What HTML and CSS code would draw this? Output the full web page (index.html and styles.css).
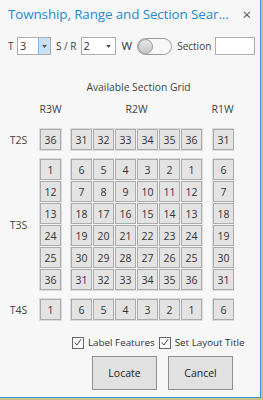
FILE: index.html
```html
<!DOCTYPE html>
<html>
<head>
<meta charset="utf-8">
<link rel="stylesheet" href="styles.css">
</head>
<body>
<div class="dialog">
  <div class="titlebar">
    <span class="title">Township, Range and Section Sear...</span>
    <span class="close">×</span>
  </div>
  <div class="params">
    <span class="lbl lbl-t">T</span>
    <div class="combo combo-t">
      <span class="val">3</span>
      <span class="drop drop-hot"><svg width="5" height="3" viewBox="0 0 5 3"><path d="M0 0H5L2.5 3Z" fill="#555"/></svg></span>
    </div>
    <span class="lbl lbl-sr">S / R</span>
    <div class="combo combo-r">
      <span class="val">2</span>
      <span class="drop"><svg width="5" height="3" viewBox="0 0 5 3"><path d="M0 0H5L2.5 3Z" fill="#555"/></svg></span>
    </div>
    <span class="lbl lbl-w">W</span>
    <div class="toggle"><span class="knob"></span></div>
    <span class="lbl lbl-sec">Section</span>
    <div class="input"></div>
  </div>
  <div class="grid-title">Available Section Grid</div>
  <div class="grid">
    <div></div>
    <div class="hdr">R3W</div>
    <div class="hdr">R2W</div>
    <div class="hdr">R1W</div>

    <div class="tlabel">T2S</div>
    <div class="group g1"><span class="sec">36</span></div>
    <div class="group g6">
      <span class="sec">31</span><span class="sec">32</span><span class="sec">33</span><span class="sec">34</span><span class="sec">35</span><span class="sec">36</span>
    </div>
    <div class="group g1 last"><span class="sec">31</span></div>

    <div class="tlabel">T3S</div>
    <div class="group g1">
      <span class="sec">1</span><span class="sec">12</span><span class="sec">13</span><span class="sec">24</span><span class="sec">25</span><span class="sec">36</span>
    </div>
    <div class="group g6">
      <span class="sec">6</span><span class="sec">5</span><span class="sec">4</span><span class="sec">3</span><span class="sec">2</span><span class="sec">1</span>
      <span class="sec">7</span><span class="sec">8</span><span class="sec">9</span><span class="sec">10</span><span class="sec">11</span><span class="sec">12</span>
      <span class="sec">18</span><span class="sec">17</span><span class="sec">16</span><span class="sec">15</span><span class="sec">14</span><span class="sec">13</span>
      <span class="sec">19</span><span class="sec">20</span><span class="sec">21</span><span class="sec">22</span><span class="sec">23</span><span class="sec">24</span>
      <span class="sec">30</span><span class="sec">29</span><span class="sec">28</span><span class="sec">27</span><span class="sec">26</span><span class="sec">25</span>
      <span class="sec">31</span><span class="sec">32</span><span class="sec">33</span><span class="sec">34</span><span class="sec">35</span><span class="sec">36</span>
    </div>
    <div class="group g1 last">
      <span class="sec">6</span><span class="sec">7</span><span class="sec">18</span><span class="sec">19</span><span class="sec">30</span><span class="sec">31</span>
    </div>

    <div class="tlabel">T4S</div>
    <div class="group g1"><span class="sec">1</span></div>
    <div class="group g6">
      <span class="sec">6</span><span class="sec">5</span><span class="sec">4</span><span class="sec">3</span><span class="sec">2</span><span class="sec">1</span>
    </div>
    <div class="group g1 last"><span class="sec">6</span></div>
  </div>
  <div class="checks">
    <label class="check"><span class="box"><svg width="11" height="11" viewBox="0 0 11 11"><path d="M2 5.5L4.3 8.3L9 1.8" fill="none" stroke="#444" stroke-width="1.1"/></svg></span><span class="ctext">Label Features</span></label>
    <label class="check"><span class="box"><svg width="11" height="11" viewBox="0 0 11 11"><path d="M2 5.5L4.3 8.3L9 1.8" fill="none" stroke="#444" stroke-width="1.1"/></svg></span><span class="ctext">Set Layout Title</span></label>
  </div>
  <div class="actions">
    <div class="btn">Locate</div>
    <div class="btn">Cancel</div>
  </div>
</div>
</body>
</html>
```

FILE: styles.css
```css
* { box-sizing: border-box; }
html, body { margin: 0; padding: 0; }
body {
  width: 263px;
  height: 400px;
  overflow: hidden;
  background: #cdbf86;
  font-family: "Open Sans", "Noto Sans", sans-serif;
  color: #333;
}
.dialog {
  width: 261px;
  height: 398px;
  background: #f7f7f7;
  border-right: 1px solid #3f8fd2;
  border-bottom: 1px solid #3f8fd2;
  overflow: hidden;
}
.titlebar {
  height: 28px;
  display: flex;
  align-items: center;
  padding-left: 8px;
  padding-right: 9px;
}
.title {
  font-size: 13.4px;
  color: #2489d3;
  white-space: nowrap;
  letter-spacing: -0.1px;
}
.close {
  margin-left: auto;
  font-size: 15px;
  color: #555;
  line-height: 1;
}
.params {
  margin-top: 9px;
  height: 18px;
  display: flex;
  align-items: center;
  padding-left: 8px;
  font-size: 10px;
  color: #444;
}
.lbl { line-height: 18px; white-space: nowrap; }
.lbl-t { width: 9px; }
.combo {
  height: 18px;
  border: 1px solid #acacac;
  background: #fff;
  display: flex;
  align-items: stretch;
}
.combo-t { width: 34px; }
.combo-r { width: 35px; margin-left: 4px; }
.lbl-sr { margin-left: 5px; }
.val { flex: 1; padding-left: 2px; line-height: 16px; font-size: 11px; color: #333; }
.drop {
  width: 12px;
  display: flex;
  align-items: center;
  justify-content: center;
}
.drop-hot {
  background: #c9e0f7;
  border-left: 1px solid #7eb4ea;
}
.lbl-w { margin-left: 6px; font-size: 11.5px; color: #333; }
.toggle {
  margin-left: 5px;
  width: 35px;
  height: 17px;
  border: 1px solid #9a9a9a;
  border-radius: 9px;
  background: #f7f7f7;
  position: relative;
}
.knob {
  position: absolute;
  left: 0px;
  top: 0px;
  width: 15px;
  height: 15px;
  border-radius: 50%;
  background: linear-gradient(#e4e4e4, #c8c8c8);
  border: 1px solid #9c9c9c;
}
.lbl-sec { margin-left: 5px; }
.input {
  margin-left: 4px;
  width: 40px;
  height: 18px;
  background: #fff;
  border: 1px solid #acacac;
}
.grid-title {
  margin-top: 25px;
  height: 14px;
  line-height: 14px;
  text-align: center;
  padding-left: 17px;
  font-size: 10.3px;
  color: #444;
}
.grid {
  margin-top: 6px;
  display: grid;
  grid-template-columns: 31px 23px 133px 23px;
  grid-template-rows: 21px 23px 133px 23px;
  column-gap: 8px;
  row-gap: 7px;
}
.hdr {
  line-height: 18px;
  text-align: center;
  font-size: 10.5px;
  color: #444;
}
.tlabel {
  display: flex;
  align-items: center;
  justify-content: center;
  padding-left: 6px;
  font-size: 10.5px;
  color: #444;
}
.group {
  display: grid;
  gap: 1px;
  border: 1px solid #dcdcdc;
  background: #f3f3f3;
  grid-auto-rows: 21px;
}
.g1 { grid-template-columns: 21px; }
.g6 { grid-template-columns: repeat(6, 21px); }
.last { margin-left: 1px; }
.sec {
  display: flex;
  align-items: center;
  justify-content: center;
  background: #e3e3e3;
  border: 1px solid #ababab;
  font-size: 10.5px;
  color: #333;
}
.checks {
  margin-top: 15px;
  padding-left: 72px;
  display: flex;
  height: 13px;
  align-items: center;
}
.check {
  display: flex;
  align-items: center;
  font-size: 9.8px;
  color: #333;
}
.check + .check { margin-left: 4px; }
.box {
  width: 12px;
  height: 12px;
  border: 1px solid #666;
  background: #fff;
  display: flex;
  align-items: center;
  justify-content: center;
}
.ctext { margin-left: 4px; line-height: 13px; white-space: nowrap; }
.actions {
  margin-top: 7px;
  padding-left: 92px;
  display: flex;
  gap: 11px;
}
.btn {
  width: 65px;
  height: 34px;
  display: flex;
  align-items: center;
  justify-content: center;
  background: #e1e1e1;
  border: 1px solid #8f8f8f;
  font-size: 10.5px;
  color: #222;
}
```
